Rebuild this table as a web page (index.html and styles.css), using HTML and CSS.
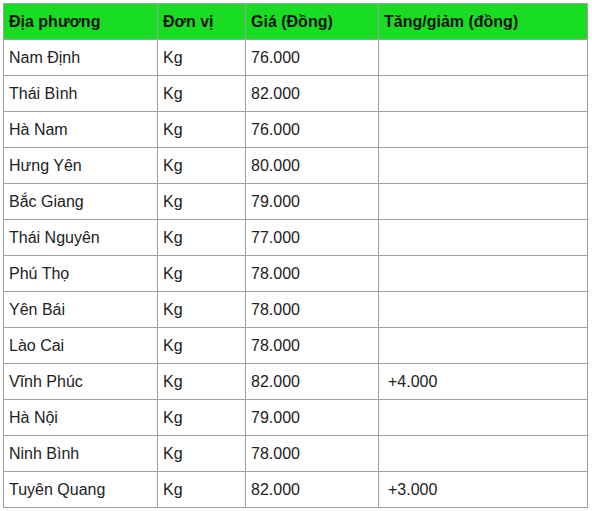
FILE: index.html
```html
<!DOCTYPE html>
<html lang="vi">
<head>
<meta charset="utf-8">
<title>Giá</title>
<link rel="stylesheet" href="styles.css">
</head>
<body>
<table class="price-table">
  <colgroup>
    <col class="c1"><col class="c2"><col class="c3"><col class="c4">
  </colgroup>
  <thead>
    <tr><th>Địa phương</th><th>Đơn vị</th><th>Giá (Đồng)</th><th>Tăng/giảm (đồng)</th></tr>
  </thead>
  <tbody>
    <tr><td>Nam Định</td><td>Kg</td><td>76.000</td><td class="change"></td></tr>
    <tr><td>Thái Bình</td><td>Kg</td><td>82.000</td><td class="change"></td></tr>
    <tr><td>Hà Nam</td><td>Kg</td><td>76.000</td><td class="change"></td></tr>
    <tr><td>Hưng Yên</td><td>Kg</td><td>80.000</td><td class="change"></td></tr>
    <tr><td>Bắc Giang</td><td>Kg</td><td>79.000</td><td class="change"></td></tr>
    <tr><td>Thái Nguyên</td><td>Kg</td><td>77.000</td><td class="change"></td></tr>
    <tr><td>Phú Thọ</td><td>Kg</td><td>78.000</td><td class="change"></td></tr>
    <tr><td>Yên Bái</td><td>Kg</td><td>78.000</td><td class="change"></td></tr>
    <tr><td>Lào Cai</td><td>Kg</td><td>78.000</td><td class="change"></td></tr>
    <tr><td>Vĩnh Phúc</td><td>Kg</td><td>82.000</td><td class="change">+4.000</td></tr>
    <tr><td>Hà Nội</td><td>Kg</td><td>79.000</td><td class="change"></td></tr>
    <tr><td>Ninh Bình</td><td>Kg</td><td>78.000</td><td class="change"></td></tr>
    <tr><td>Tuyên Quang</td><td>Kg</td><td>82.000</td><td class="change">+3.000</td></tr>
  </tbody>
</table>
</body>
</html>
```
FILE: styles.css
```css
html, body {
  margin: 0;
  padding: 0;
  background: #fff;
}
body {
  padding: 3px;
  font-family: "Liberation Sans", Arial, sans-serif;
  font-size: 16px;
  color: #222;
}
.price-table {
  border-collapse: collapse;
  table-layout: fixed;
  width: 585px;
}
.c1 { width: 154px; }
.c2 { width: 88px; }
.c3 { width: 133px; }
.c4 { width: 209px; }
.price-table th,
.price-table td {
  border: 1px solid #a0a0a0;
  height: 36px;
  padding: 0 5px;
  box-sizing: border-box;
  text-align: left;
  vertical-align: middle;
  white-space: nowrap;
}
.price-table th {
  background: #19dd22;
  font-weight: bold;
  color: #111;
}
.price-table td {
  color: #222;
}
.price-table td.change {
  padding-left: 9px;
}
```
